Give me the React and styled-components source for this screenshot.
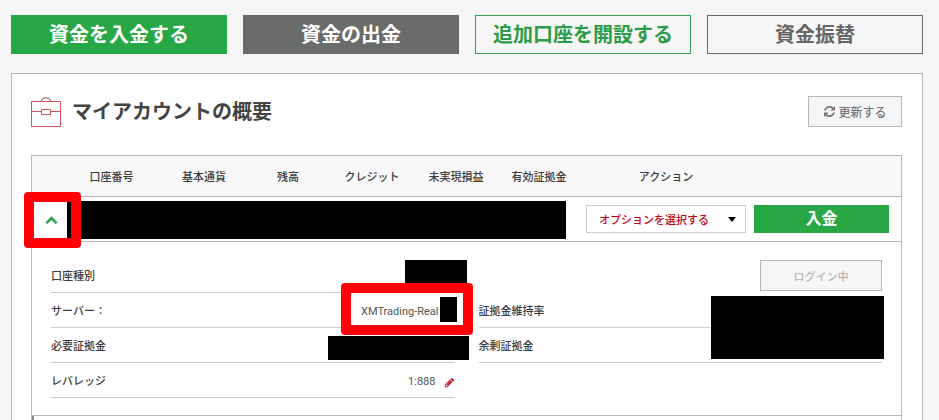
import React from "react";
import styled, { createGlobalStyle, css } from "styled-components";

const GlobalStyle = createGlobalStyle`
  *, *::before, *::after { box-sizing: border-box; }
  body {
    margin: 0;
    background: #f6f6f6;
    color: #3c3c3c;
    font-family: Roboto, "Noto Sans CJK JP", sans-serif;
    font-size: 11px;
    line-height: 16px;
  }
  button, select { font-family: inherit; margin: 0; padding: 0; }
`;

const Page = styled.main`
  display: flex;
  flex-direction: column;
  gap: 19px;
  height: 100vh;
  overflow: hidden;
  padding: 15px 16px 0 11px;
`;

const Actions = styled.nav`
  display: grid;
  grid-template-columns: repeat(4, 1fr);
  gap: 16px;
`;

const tones = {
  green: css`background: #28a745; border-color: #28a745; color: #fff;`,
  gray: css`background: #6a6b6b; border-color: #6a6b6b; color: #fff;`,
  greenOutline: css`background: transparent; border-color: #34a04e; color: #2d9c48;`,
  grayOutline: css`background: transparent; border-color: #6a6b6b; color: #666;`,
};

const ActionButton = styled.button`
  height: 39px;
  border: 1px solid;
  font-size: 20px;
  line-height: 36px;
  font-weight: 700;
  ${(p) => tones[p.$tone]}
`;

const Panel = styled.section`
  flex: 1;
  min-height: 0;
  display: flex;
  flex-direction: column;
  background: #fff;
  border: 1px solid #b7b7b7;
  border-bottom: 0;
  padding: 22px 20px 0 19px;
`;

const PanelHeader = styled.header`
  display: flex;
  align-items: center;
  height: 32px;
  margin-bottom: 27px;
`;

const Title = styled.h1`
  flex: 1;
  margin: 0 0 0 11px;
  font-size: 20px;
  line-height: 30px;
  font-weight: 700;
  color: #444;
`;

const PlainButton = styled.button`
  display: flex;
  align-items: center;
  justify-content: center;
  gap: 2px;
  width: ${(p) => p.$width};
  height: 31px;
  background: #f6f6f6;
  border: 1px solid #b7b7b7;
  color: ${(p) => (p.disabled ? "#b7b7b7" : "#777")};
  font-size: ${(p) => (p.disabled ? "11px" : "12px")};
  font-weight: 500;
`;

const TableFrame = styled.div`
  flex: 1;
  margin-top: 1px;
  border: 1px solid #b7b7b7;
  border-bottom: 0;
`;

const Table = styled.table`
  width: 100%;
  table-layout: fixed;
  border-collapse: separate;
  border-spacing: 0;
`;

const Col = styled.col`
  width: ${(p) => p.$width}px;
`;

const HeadCell = styled.th`
  height: 41px;
  padding: 4px 0 0;
  background: #f8f8f8;
  border-bottom: 1px solid #b7b7b7;
  font-weight: 500;
  white-space: nowrap;
`;

const Cell = styled.td`
  position: relative;
  height: 45px;
  padding: ${(p) => p.$pad || "0"};
  border-bottom: 1px solid #b7b7b7;
`;

const DetailCell = styled.td`
  padding: 16px 19px 17px;
  border-bottom: 1px solid #b7b7b7;
`;

const NextCell = styled.td`
  height: 40px;
  padding: 0;
  border-left: 2px solid #888;
`;

const Toggle = styled.button`
  display: flex;
  align-items: center;
  justify-content: center;
  width: 100%;
  height: 44px;
  padding-left: 4px;
  border: 0;
  background: none;
  color: #34a04e;
`;

const Redaction = styled.div`
  height: 38px;
  background: #000;
`;

const Mask = styled.span`
  position: absolute;
  top: ${(p) => p.$top}px;
  right: ${(p) => p.$right}px;
  width: ${(p) => p.$width}px;
  height: ${(p) => p.$height}px;
  background: #000;
`;

const Highlight = styled.span`
  position: absolute;
  z-index: 1;
  inset: ${(p) => p.$inset};
  width: ${(p) => p.$width || "auto"};
  border: 10px solid #fe0008;
  border-radius: 4px;
  pointer-events: none;
`;

const SelectBox = styled.div`
  position: relative;
  height: 28px;
`;

const Select = styled.select`
  appearance: none;
  width: 100%;
  height: 28px;
  padding: 2px 24px 0 12px;
  border: 1px solid #ccc;
  border-radius: 0;
  background: #fff;
  color: #c00418;
  font-size: 11px;
  font-weight: 500;
`;

const Caret = styled.svg`
  position: absolute;
  right: 10px;
  top: 12px;
  pointer-events: none;
`;

const DepositButton = styled.button`
  display: block;
  width: 100%;
  height: 28px;
  border: 0;
  background: #28a745;
  color: #fff;
  font-size: 16px;
  line-height: 26px;
  font-weight: 700;
`;

const Details = styled.div`
  display: grid;
  grid-template-columns: 1fr 1fr;
  gap: 24px;
`;

const List = styled.dl`
  margin: 0;
`;

const Item = styled.div`
  position: relative;
  display: flex;
  align-items: center;
  justify-content: space-between;
  height: 35px;
  padding-top: 4px;
  border-bottom: 1px solid #ccc;
`;

const Term = styled.dt`
  font-weight: 500;
`;

const Value = styled.dd`
  display: flex;
  align-items: center;
  gap: 8px;
  margin: 0;
  padding-right: ${(p) => p.$end || 0}px;
  color: #555;
`;

const LoginSlot = styled.div`
  display: flex;
  justify-content: flex-end;
  height: 35px;
  padding-top: 2px;
`;

const EditButton = styled.button`
  display: flex;
  border: 0;
  background: none;
  color: #c4202f;
`;

const BriefcaseIcon = () => (
  <svg width="30" height="30" viewBox="0 0 30 30" fill="none" stroke="#d0545c" aria-hidden="true">
    <path d="M.5 4.5h29v25H.5zM.5 14.5h10M19.5 14.5h10M10.5 12.5h9v5h-9z" />
    <path d="M10 4.5Q11 .7 15 .7T20 4.5" stroke="#8c4a48" />
  </svg>
);

const RefreshIcon = () => (
  <svg width="13" height="13" viewBox="0 0 1792 1792" fill="currentColor" aria-hidden="true">
    <path d="M1639 1056q0 5-1 7-64 268-268 434.500t-478 166.500q-146 0-282.500-55t-243.500-157l-129 129q-19 19-45 19t-45-19-19-45v-448q0-26 19-45t45-19h448q26 0 45 19t19 45-19 45l-137 137q71 66 161 102t187 36q134 0 250-65t186-179q11-17 53-117 8-23 30-23h192q13 0 22.500 9.500t9.500 22.500zm25-800v448q0 26-19 45t-45 19h-448q-26 0-45-19t-19-45 19-45l138-138q-148-137-349-137-134 0-250 65t-186 179q-11 17-53 117-8 23-30 23h-199q-13 0-22.500-9.500t-9.500-22.500v-7q65-268 270-434.500t480-166.500q146 0 284 55.500t245 156.500l130-129q19-19 45-19t45 19 19 45z" />
  </svg>
);

const ChevronIcon = () => (
  <svg width="13" height="13" viewBox="0 0 1792 1792" fill="currentColor" aria-hidden="true">
    <path d="M1683 1331l-166 165q-19 19-45 19t-45-19l-531-531-531 531q-19 19-45 19t-45-19l-166-165q-19-19-19-45.500t19-45.500l742-741q19-19 45-19t45 19l742 741q19 19 19 45.500t-19 45.500z" />
  </svg>
);

const PencilIcon = () => (
  <svg width="11" height="11" viewBox="0 0 1792 1792" fill="currentColor" aria-hidden="true">
    <path d="M491 1536l91-91-235-235-91 91v107h128v128h107zm523-928q0-22-22-22-10 0-17 7l-542 542q-7 7-7 17 0 22 22 22 10 0 17-7l542-542q7-7 7-17zm-54-192l416 416-832 832h-416v-416zm683 96q0 53-37 90l-166 166-416-416 166-165q36-38 90-38 53 0 91 38l235 234q37 39 37 91z" />
  </svg>
);

const actions = [
  ["資金を入金する", "green"],
  ["資金の出金", "gray"],
  ["追加口座を開設する", "greenOutline"],
  ["資金振替", "grayOutline"],
];

const columns = [
  ["", 35],
  ["口座番号", 89],
  ["基本通貨", 96],
  ["残高", 72],
  ["クレジット", 96],
  ["未実現損益", 72],
  ["有効証拠金", 94],
  ["アクション", 160],
  ["", 155],
];

export default function App() {
  return (
    <>
      <GlobalStyle />
      <Page>
        <Actions>
          {actions.map(([label, tone]) => (
            <ActionButton key={label} $tone={tone}>{label}</ActionButton>
          ))}
        </Actions>
        <Panel>
          <PanelHeader>
            <BriefcaseIcon />
            <Title>マイアカウントの概要</Title>
            <PlainButton $width="94px">
              <RefreshIcon />
              更新する
            </PlainButton>
          </PanelHeader>
          <TableFrame>
            <Table>
              <colgroup>
                {columns.map(([, width], i) => <Col key={i} $width={width} />)}
              </colgroup>
              <thead>
                <tr>
                  {columns.map(([label], i) => <HeadCell key={i}>{label}</HeadCell>)}
                </tr>
              </thead>
              <tbody>
                <tr>
                  <Cell>
                    <Toggle aria-label="詳細" aria-expanded="true">
                      <ChevronIcon />
                    </Toggle>
                    <Highlight $inset="-5px -14px -7px -8px" />
                  </Cell>
                  <Cell colSpan={6} $pad="2px 20px 0 0">
                    <Redaction />
                  </Cell>
                  <Cell>
                    <SelectBox>
                      <Select aria-label="アクション">
                        <option>オプションを選択する</option>
                      </Select>
                      <Caret width="8" height="5" viewBox="0 0 8 5" aria-hidden="true">
                        <path d="M0 0h8L4 5z" />
                      </Caret>
                    </SelectBox>
                  </Cell>
                  <Cell $pad="0 12px 0 8px">
                    <DepositButton>入金</DepositButton>
                  </Cell>
                </tr>
                <tr>
                  <DetailCell colSpan={9}>
                    <Details>
                      <List>
                        <Item>
                          <Term>口座種別</Term>
                          <Value><Mask $top={2} $right={-12} $width={62} $height={24} /></Value>
                        </Item>
                        <Item>
                          <Term>サーバー：</Term>
                          <Value $end={16}>
                            XMTrading-Real
                            <Mask $top={4} $right={-2} $width={17} $height={25} />
                            <Highlight $inset="-10px -18px -8px auto" $width="132px" />
                          </Value>
                        </Item>
                        <Item>
                          <Term>必要証拠金</Term>
                          <Value><Mask $top={8} $right={-14} $width={141} $height={24} /></Value>
                        </Item>
                        <Item>
                          <Term>レバレッジ</Term>
                          <Value>
                            1:888
                            <EditButton aria-label="レバレッジを変更"><PencilIcon /></EditButton>
                          </Value>
                        </Item>
                      </List>
                      <div>
                        <LoginSlot>
                          <PlainButton $width="122px" disabled>ログイン中</PlainButton>
                        </LoginSlot>
                        <List>
                          <Item>
                            <Term>証拠金維持率</Term>
                            <Value><Mask $top={3} $right={-2} $width={173} $height={63} /></Value>
                          </Item>
                          <Item>
                            <Term>余剰証拠金</Term>
                            <Value />
                          </Item>
                        </List>
                      </div>
                    </Details>
                  </DetailCell>
                </tr>
                <tr>
                  <NextCell colSpan={9} />
                </tr>
              </tbody>
            </Table>
          </TableFrame>
        </Panel>
      </Page>
    </>
  );
}
